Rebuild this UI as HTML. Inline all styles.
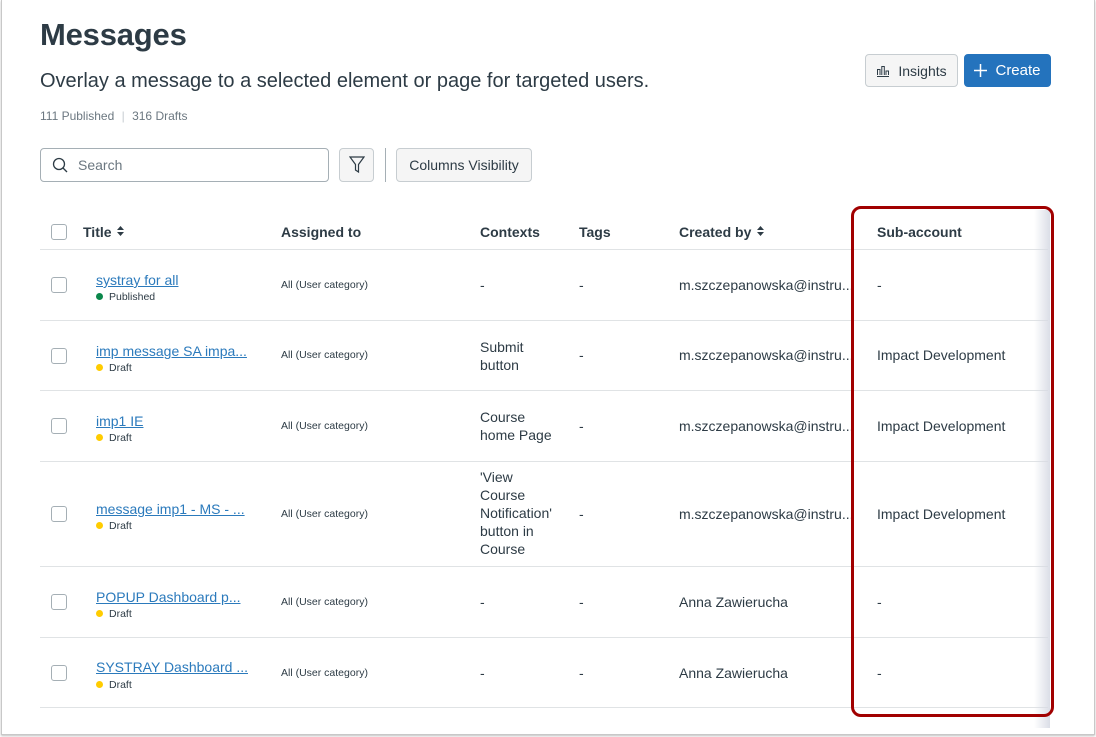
<!DOCTYPE html>
<html><head><style>
body{margin:0;width:1096px;height:737px;overflow:hidden;background:#fff;font-family:"Liberation Sans",sans-serif;color:#2d3b45;position:relative}
.a{position:absolute;white-space:nowrap}
.frame{position:absolute;left:1px;top:0;width:1092px;height:734px;border:1px solid #c8c8c8;border-top:none;box-shadow:0 1px 2px rgba(0,0,0,.25)}
.btn{position:absolute;border:1px solid #c7cdd1;background:#f5f5f5;border-radius:4px;font-size:14px;display:flex;align-items:center;justify-content:center;box-sizing:border-box}
.cb{position:absolute;left:51px;width:14px;height:14px;border:1px solid #a5afb5;border-radius:3px;background:#fff}
.line{position:absolute;left:40px;width:1008px;height:1px;background:#e0e3e5}
.th{position:absolute;top:224px;font-size:14px;font-weight:bold}
.lnk{position:absolute;left:96px;font-size:14px;color:#2b7abc;text-decoration:underline}
.st{position:absolute;left:96px;font-size:10.5px;color:#2d3b45}
.st i{display:inline-block;width:7px;height:7px;border-radius:50%;margin-right:6px;vertical-align:0}
.sm{position:absolute;left:281px;font-size:10.5px}
.t{position:absolute;font-size:14px}
.sort{display:inline-block;vertical-align:1px;margin-left:2px}
</style></head><body>
<div class="frame"></div>
<div class="a" style="left:40px;top:17px;font-size:31px;font-weight:bold;color:#2d3b45;letter-spacing:-0.2px">Messages</div>
<div class="a" style="left:40px;top:70px;font-size:20px">Overlay a message to a selected element or page for targeted users.</div>
<div class="a" style="left:40px;top:109px;font-size:12px;color:#6b7780">111 Published <span style="color:#c7cdd1;margin:0 4px">|</span> 316 Drafts</div>
<div class="btn" style="left:865px;top:54px;width:93px;height:33px;color:#2d3b45"><svg width="14" height="12" viewBox="0 0 14 12" style="margin-right:8px"><path d="M1 11.5h12M1.5 10V4.5h2.5V10M5.8 10V1.5h2.5V10M10 10V6h2.5v4" fill="none" stroke="#2d3b45" stroke-width="1"/></svg>Insights</div>
<div class="btn" style="left:964px;top:54px;width:87px;height:33px;background:#2473bd;border-color:#2473bd;color:#fff;font-size:15px"><svg width="13" height="13" viewBox="0 0 13 13" style="margin-right:8px"><path d="M6.5 0v13M0 6.5h13" stroke="#fff" stroke-width="1.5"/></svg>Create</div>
<div class="btn" style="left:40px;top:148px;width:289px;height:34px;background:#fff;border-color:#a5afb5;justify-content:flex-start;padding-left:11px;color:#6b7780"><svg width="16" height="16" viewBox="0 0 16 16" style="margin-right:10px"><circle cx="7" cy="7" r="5.5" fill="none" stroke="#2d3b45" stroke-width="1.3"/><path d="M11 11l4 4" stroke="#2d3b45" stroke-width="1.3"/></svg>Search</div>
<div class="btn" style="left:339px;top:148px;width:35px;height:34px"><svg width="16" height="18" viewBox="0 0 16 18"><path d="M1 1h14L9.5 8.5V16L6.5 14V8.5z" fill="none" stroke="#2d3b45" stroke-width="1.2"/></svg></div>
<div class="a" style="left:385px;top:148px;width:1px;height:34px;background:#a5afb5"></div>
<div class="btn" style="left:396px;top:148px;width:136px;height:34px">Columns Visibility</div>

<div class="cb" style="top:224px"></div>
<div class="th" style="left:83px">Title <svg class="sort" width="7" height="10" viewBox="0 0 7 10"><path d="M3.5 0L7 4H0zM3.5 10L7 6H0z" fill="#2d3b45"/></svg></div>
<div class="th" style="left:281px">Assigned to</div>
<div class="th" style="left:480px">Contexts</div>
<div class="th" style="left:579px">Tags</div>
<div class="th" style="left:679px">Created by <svg class="sort" width="7" height="10" viewBox="0 0 7 10"><path d="M3.5 0L7 4H0zM3.5 10L7 6H0z" fill="#2d3b45"/></svg></div>
<div class="th" style="left:877px">Sub-account</div>
<div class="line" style="top:249px"></div>
<div class="line" style="top:320px"></div>
<div class="line" style="top:390px"></div>
<div class="line" style="top:461px"></div>
<div class="line" style="top:566px"></div>
<div class="line" style="top:637px"></div>
<div class="line" style="top:707px"></div>

<div class="cb" style="top:277px"></div>
<div class="lnk" style="top:272px">systray for all</div>
<div class="st" style="top:291px"><i style="background:#0b874b"></i>Published</div>
<div class="sm" style="top:279px">All (User category)</div>
<div class="t" style="left:480px;top:277px">-</div><div class="t" style="left:579px;top:277px">-</div>
<div class="t" style="left:679px;top:277px">m.szczepanowska@instru...</div>
<div class="t" style="left:877px;top:277px">-</div>

<div class="cb" style="top:348px"></div>
<div class="lnk" style="top:343px">imp message SA impa...</div>
<div class="st" style="top:362px"><i style="background:#fc0"></i>Draft</div>
<div class="sm" style="top:349px">All (User category)</div>
<div class="t" style="left:480px;top:338px;line-height:18px">Submit<br>button</div><div class="t" style="left:579px;top:347px">-</div>
<div class="t" style="left:679px;top:347px">m.szczepanowska@instru...</div>
<div class="t" style="left:877px;top:347px">Impact Development</div>

<div class="cb" style="top:418px"></div>
<div class="lnk" style="top:413px">imp1 IE</div>
<div class="st" style="top:432px"><i style="background:#fc0"></i>Draft</div>
<div class="sm" style="top:420px">All (User category)</div>
<div class="t" style="left:480px;top:408px;line-height:18px">Course<br>home Page</div><div class="t" style="left:579px;top:418px">-</div>
<div class="t" style="left:679px;top:418px">m.szczepanowska@instru...</div>
<div class="t" style="left:877px;top:418px">Impact Development</div>

<div class="cb" style="top:506px"></div>
<div class="lnk" style="top:501px">message imp1 - MS - ...</div>
<div class="st" style="top:520px"><i style="background:#fc0"></i>Draft</div>
<div class="sm" style="top:508px">All (User category)</div>
<div class="t" style="left:480px;top:468px;line-height:18px">'View<br>Course<br>Notification'<br>button in<br>Course</div><div class="t" style="left:579px;top:506px">-</div>
<div class="t" style="left:679px;top:506px">m.szczepanowska@instru...</div>
<div class="t" style="left:877px;top:506px">Impact Development</div>

<div class="cb" style="top:594px"></div>
<div class="lnk" style="top:589px">POPUP Dashboard p...</div>
<div class="st" style="top:608px"><i style="background:#fc0"></i>Draft</div>
<div class="sm" style="top:596px">All (User category)</div>
<div class="t" style="left:480px;top:594px">-</div><div class="t" style="left:579px;top:594px">-</div>
<div class="t" style="left:679px;top:594px">Anna Zawierucha</div>
<div class="t" style="left:877px;top:594px">-</div>

<div class="cb" style="top:665px"></div>
<div class="lnk" style="top:659px">SYSTRAY Dashboard ...</div>
<div class="st" style="top:679px"><i style="background:#fc0"></i>Draft</div>
<div class="sm" style="top:667px">All (User category)</div>
<div class="t" style="left:480px;top:665px">-</div><div class="t" style="left:579px;top:665px">-</div>
<div class="t" style="left:679px;top:665px">Anna Zawierucha</div>
<div class="t" style="left:877px;top:665px">-</div>

<div class="a" style="left:1034px;top:210px;width:16px;height:518px;background:linear-gradient(90deg,rgba(220,223,232,0),rgba(215,218,228,.9))"></div>
<div class="a" style="left:851px;top:206px;width:197px;height:505px;border:3px solid #a10000;border-radius:10px"></div>
</body></html>
